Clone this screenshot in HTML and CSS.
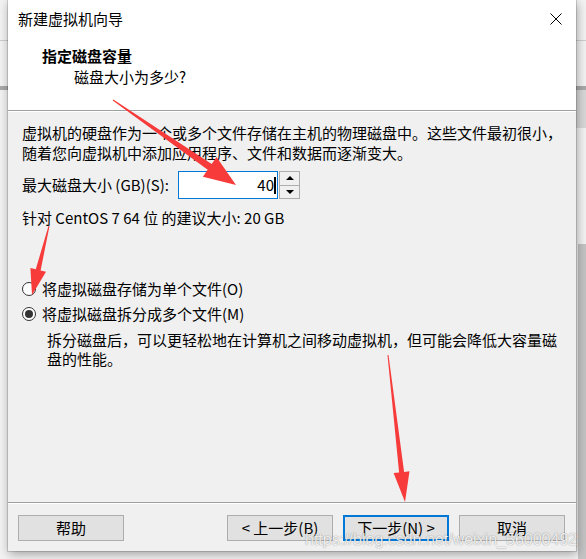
FILE: index.html
```html
<!DOCTYPE html>
<html lang="zh-CN">
<head>
<meta charset="utf-8">
<title>新建虚拟机向导</title>
<link rel="stylesheet" href="styles.css">
</head>
<body>
<div class="screen">
  <div class="dialog">
    <div class="titlebar">
      <span class="title">新建虚拟机向导</span>
      <svg class="close" width="12" height="12" viewBox="0 0 12 12"><path d="M0.5 0.5 L11.5 11.5 M11.5 0.5 L0.5 11.5" stroke="#000" stroke-width="1" fill="none"/></svg>
    </div>
    <div class="header">
      <div class="h-title">指定磁盘容量</div>
      <div class="h-sub">磁盘大小为多少?</div>
    </div>
    <div class="content">
      <p class="intro">虚拟机的硬盘作为一个或多个文件存储在主机的物理磁盘中。这些文件最初很小，随着您向虚拟机中添加应用程序、文件和数据而逐渐变大。</p>
      <div class="size-row">
        <span class="size-label">最大磁盘大小 (GB)(S):</span>
        <div class="spin">
          <div class="spin-input"><span>40</span><span class="caret"></span></div>
          <div class="spin-btns">
            <span class="spin-btn up"></span>
            <span class="spin-btn down"></span>
          </div>
        </div>
      </div>
      <div class="recommend">针对 CentOS 7 64 位 的建议大小: 20 GB</div>
      <div class="radios">
        <div class="radio-row"><span class="radio"></span><span>将虚拟磁盘存储为单个文件(O)</span></div>
        <div class="radio-row"><span class="radio checked"></span><span>将虚拟磁盘拆分成多个文件(M)</span></div>
        <p class="desc">拆分磁盘后，可以更轻松地在计算机之间移动虚拟机，但可能会降低大容量磁盘的性能。</p>
      </div>
    </div>
    <div class="footer">
      <button class="btn help">帮助</button>
      <button class="btn">&lt; 上一步(B)</button>
      <button class="btn default">下一步(N) &gt;</button>
      <button class="btn">取消</button>
    </div>
  </div>
</div>
<svg class="annot" width="586" height="559" viewBox="0 0 586 559">
  <polygon class="arrow" points="113.3,99.5 211.7,163.9 216.5,156.9 236,185 202.9,176.7 207.7,169.7 112.7,100.5"/>
  <polygon class="arrow" points="48.5,225.9 35.8,269.2 30.4,267.9 32,295 46,271.7 40.6,270.4 49.5,226.1"/>
  <polygon class="arrow" points="387.5,355.1 399.1,472.5 393.6,473.1 405,502 409.5,471.3 404.1,471.9 388.5,354.9"/>
</svg>
<div class="watermark">https://blog.csdn.net/weixin_56000492</div>
</body>
</html>
```
FILE: styles.css
```css
* { box-sizing: border-box; }
html, body { margin: 0; }
body {
  width: 586px;
  height: 559px;
  overflow: hidden;
  font-family: "Noto Sans CJK SC", "Microsoft YaHei", sans-serif;
  font-size: 15px;
  color: #000;
  background:
    linear-gradient(#cfcfcf, #cfcfcf) 0 40px / 100% 1px no-repeat,
    linear-gradient(#a9a9a9, #a9a9a9) 0 86px / 100% 4px no-repeat,
    linear-gradient(#d8d8d8, #d8d8d8) 576px 90px / 10px 38px no-repeat,
    linear-gradient(#c4c4c4, #c4c4c4) 578px 244px / 8px 315px no-repeat,
    #f3f3f3;
}
.screen { padding-left: 8px; }
.dialog {
  width: 568px;
  height: 551px;
  display: flex;
  flex-direction: column;
  background: #f0f0f0;
  box-shadow: 0 0 0 1px rgba(0,0,0,0.14), 1px 3px 10px rgba(0,0,0,0.35);
}
.titlebar {
  height: 38px;
  background: #fff;
  display: flex;
  align-items: center;
  padding: 0 14px 0 10px;
}
.title { flex: 1; line-height: 20px; }
.close { display: block; }
.header {
  background: #fff;
  height: 73px;
  border-bottom: 1px solid #a0a0a0;
  padding: 8px 0 0 34px;
}
.h-title { font-weight: bold; line-height: 20px; }
.h-sub { line-height: 20px; margin: 1px 0 0 32px; }
.content {
  flex: 1;
  border-top: 1px solid #fff;
  padding: 11px 6px 0 14px;
}
.intro { margin: 0; line-height: 20px; }
.size-row {
  display: flex;
  align-items: center;
  margin-top: 8px;
  height: 28px;
}
.size-label { width: 156px; line-height: 20px; }
.spin { display: flex; height: 28px; }
.spin-input {
  width: 100px;
  border: 1px solid #0078d7;
  background: #fff;
  display: flex;
  align-items: center;
  justify-content: flex-end;
  padding-right: 1px;
  line-height: 20px;
}
.caret { width: 2px; height: 17px; background: #000; }
.spin-btns {
  width: 21px;
  margin-left: 1px;
  border: 1px solid #adadad;
  display: flex;
  flex-direction: column;
  background: #f0f0f0;
}
.spin-btn {
  flex: 1;
  display: flex;
  align-items: center;
  justify-content: center;
}
.spin-btn + .spin-btn { border-top: 1px solid #adadad; }
.up::before {
  content: "";
  border-left: 4px solid transparent;
  border-right: 4px solid transparent;
  border-bottom: 4px solid #000;
}
.down::before {
  content: "";
  border-left: 4px solid transparent;
  border-right: 4px solid transparent;
  border-top: 4px solid #000;
}
.recommend { margin-top: 9px; line-height: 20px; }
.radios { margin-top: 48px; }
.radio-row {
  display: flex;
  align-items: center;
  height: 25px;
  line-height: 20px;
}
.radio {
  width: 14px;
  height: 14px;
  border: 1px solid #333;
  border-radius: 50%;
  background: #fff;
  margin-right: 6px;
  display: flex;
  align-items: center;
  justify-content: center;
}
.radio.checked::after {
  content: "";
  width: 8px;
  height: 8px;
  border-radius: 50%;
  background: #333;
}
.desc { margin: 4px 0 0 25px; line-height: 19px; }
.footer {
  height: 49px;
  border-top: 1px solid #a0a0a0;
  box-shadow: inset 0 1px #fff;
  display: flex;
  align-items: center;
  gap: 10px;
  padding: 1px 11px 0 10px;
}
.btn {
  width: 106px;
  height: 26px;
  padding: 0;
  background: #e1e1e1;
  border: 1px solid #adadad;
  font: inherit;
  line-height: 22px;
  color: #000;
}
.btn.help { margin-right: auto; }
.btn.default { border: 2px solid #0078d7; }
.annot {
  position: absolute;
  top: 0;
  left: 0;
  pointer-events: none;
}
.arrow { fill: #f73b3b; }
.watermark {
  position: absolute;
  left: 305px;
  top: 530px;
  font-family: "Liberation Sans", Arial, sans-serif;
  font-size: 16px;
  line-height: 20px;
  color: rgba(255,255,255,0.85);
  text-shadow: 0 0 1px rgba(0,0,0,0.35), 0 0 2px rgba(0,0,0,0.15);
  white-space: nowrap;
  pointer-events: none;
}
```
